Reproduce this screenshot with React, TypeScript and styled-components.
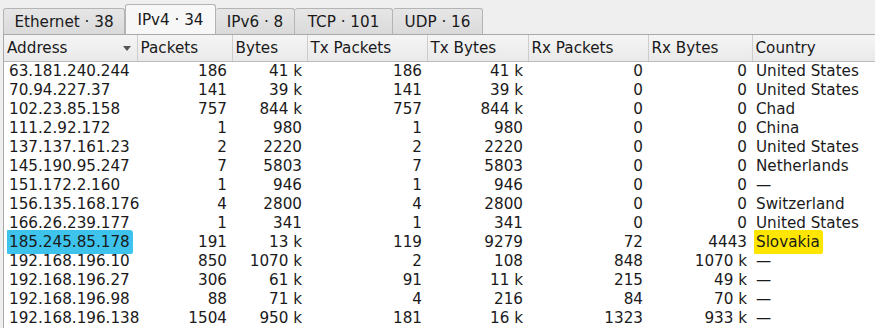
import React from 'react';
import styled, { createGlobalStyle } from 'styled-components';

const GlobalStyle = createGlobalStyle`
    html, body {
        margin: 0;
        padding: 0;
        background: #efefef;
    }
    body {
        font-family: "DejaVu Sans", "Liberation Sans", sans-serif;
        font-size: 15.2px;
        color: #1a1a1a;
    }
`;

const Window = styled.div`
    width: 875px;
    height: 328px;
    overflow: hidden;
    display: flex;
    flex-direction: column;
`;

const TabBar = styled.div`
    display: flex;
    align-items: flex-end;
    height: 34px;
    padding-left: 3px;
    box-sizing: border-box;
`;

const Tab = styled.div<{ selected?: boolean; width: number }>`
    box-sizing: border-box;
    width: ${props => props.width}px;
    height: ${props => props.selected ? 30 : 26}px;
    display: flex;
    align-items: center;
    justify-content: center;
    background: ${props => props.selected ? '#f7f7f7' : 'linear-gradient(#e6e6e6, #dadada)'};
    border: 1px solid #b4b4b4;
    border-bottom: none;
    border-left-width: ${props => props.selected ? 1 : 0}px;
    border-radius: 3px 3px 0 0;
    white-space: nowrap;
    &:first-child {
        border-left-width: 1px;
    }
`;

const Frame = styled.div`
    flex: 1;
    margin-left: 3px;
    border-top: 1px solid #a9a9a9;
    border-left: 1px solid #a9a9a9;
    background: #ffffff;
    overflow: hidden;
`;

const Table = styled.table`
    border-collapse: collapse;
    table-layout: fixed;
    width: 900px;
    font-size: 15.2px;
`;

const HeadCell = styled.th`
    height: 26px;
    padding: 0 0 0 3px;
    text-align: left;
    font-weight: normal;
    background: linear-gradient(#f5f5f5, #e9e9e9);
    border-right: 1px solid #cdcdcd;
    border-bottom: 1px solid #bcbcbc;
    white-space: nowrap;
    position: relative;
`;

const SortArrow = styled.span`
    position: absolute;
    right: 6px;
    top: 11px;
    width: 0;
    height: 0;
    border-left: 4px solid transparent;
    border-right: 4px solid transparent;
    border-top: 5px solid #555;
`;

const Cell = styled.td<{ numeric?: boolean }>`
    height: 19px;
    padding: 0 ${props => props.numeric ? '5px' : '0'} 0 ${props => props.numeric ? '0' : '5px'};
    text-align: ${props => props.numeric ? 'right' : 'left'};
    white-space: nowrap;
    line-height: 19px;
`;

const Marker = styled.span<{ color: string }>`
    background: ${props => props.color};
    margin-left: -2px;
    padding: 3px 3px 3px 2px;
    border-radius: 1px 3px 2px 1px;
`;

const columns = [
    { title: 'Address', width: 133, sorted: true },
    { title: 'Packets', width: 95 },
    { title: 'Bytes', width: 75 },
    { title: 'Tx Packets', width: 120 },
    { title: 'Tx Bytes', width: 101 },
    { title: 'Rx Packets', width: 120 },
    { title: 'Rx Bytes', width: 104 },
    { title: 'Country', width: 152 },
];

type Row = [string, string, string, string, string, string, string, string];

const rows: Row[] = [
    ['63.181.240.244', '186', '41 k', '186', '41 k', '0', '0', 'United States'],
    ['70.94.227.37', '141', '39 k', '141', '39 k', '0', '0', 'United States'],
    ['102.23.85.158', '757', '844 k', '757', '844 k', '0', '0', 'Chad'],
    ['111.2.92.172', '1', '980', '1', '980', '0', '0', 'China'],
    ['137.137.161.23', '2', '2220', '2', '2220', '0', '0', 'United States'],
    ['145.190.95.247', '7', '5803', '7', '5803', '0', '0', 'Netherlands'],
    ['151.172.2.160', '1', '946', '1', '946', '0', '0', '—'],
    ['156.135.168.176', '4', '2800', '4', '2800', '0', '0', 'Switzerland'],
    ['166.26.239.177', '1', '341', '1', '341', '0', '0', 'United States'],
    ['185.245.85.178', '191', '13 k', '119', '9279', '72', '4443', 'Slovakia'],
    ['192.168.196.10', '850', '1070 k', '2', '108', '848', '1070 k', '—'],
    ['192.168.196.27', '306', '61 k', '91', '11 k', '215', '49 k', '—'],
    ['192.168.196.98', '88', '71 k', '4', '216', '84', '70 k', '—'],
    ['192.168.196.138', '1504', '950 k', '181', '16 k', '1323', '933 k', '—'],
];

const tabs = [
    { label: 'Ethernet · 38', width: 122 },
    { label: 'IPv4 · 34', width: 91 },
    { label: 'IPv6 · 8', width: 79 },
    { label: 'TCP · 101', width: 98 },
    { label: 'UDP · 16', width: 90 },
];

const App = () => {
    return (
        <Window>
            <GlobalStyle />
            <TabBar>
                {tabs.map((t, i) => <Tab key={t.label} width={t.width} selected={i === 1}>{t.label}</Tab>)}
            </TabBar>
            <Frame>
                <Table>
                    <colgroup>
                        {columns.map(c => <col key={c.title} style={{ width: c.width }} />)}
                    </colgroup>
                    <thead>
                        <tr>
                            {columns.map(c =>
                                <HeadCell key={c.title}>
                                    {c.title}
                                    {c.sorted && <SortArrow />}
                                </HeadCell>
                            )}
                        </tr>
                    </thead>
                    <tbody>
                        {rows.map(r => {
                            const flagged = r[0] === '185.245.85.178';
                            return (
                                <tr key={r[0]}>
                                    <Cell>{flagged ? <Marker color="#3dc3ec">{r[0]}</Marker> : r[0]}</Cell>
                                    {r.slice(1, 7).map((v, i) => <Cell key={i} numeric>{v}</Cell>)}
                                    <Cell style={{ paddingLeft: 4 }}>{flagged ? <Marker color="#ffe600">{r[7]}</Marker> : r[7]}</Cell>
                                </tr>
                            );
                        })}
                    </tbody>
                </Table>
            </Frame>
        </Window>
    );
};

export default App;
